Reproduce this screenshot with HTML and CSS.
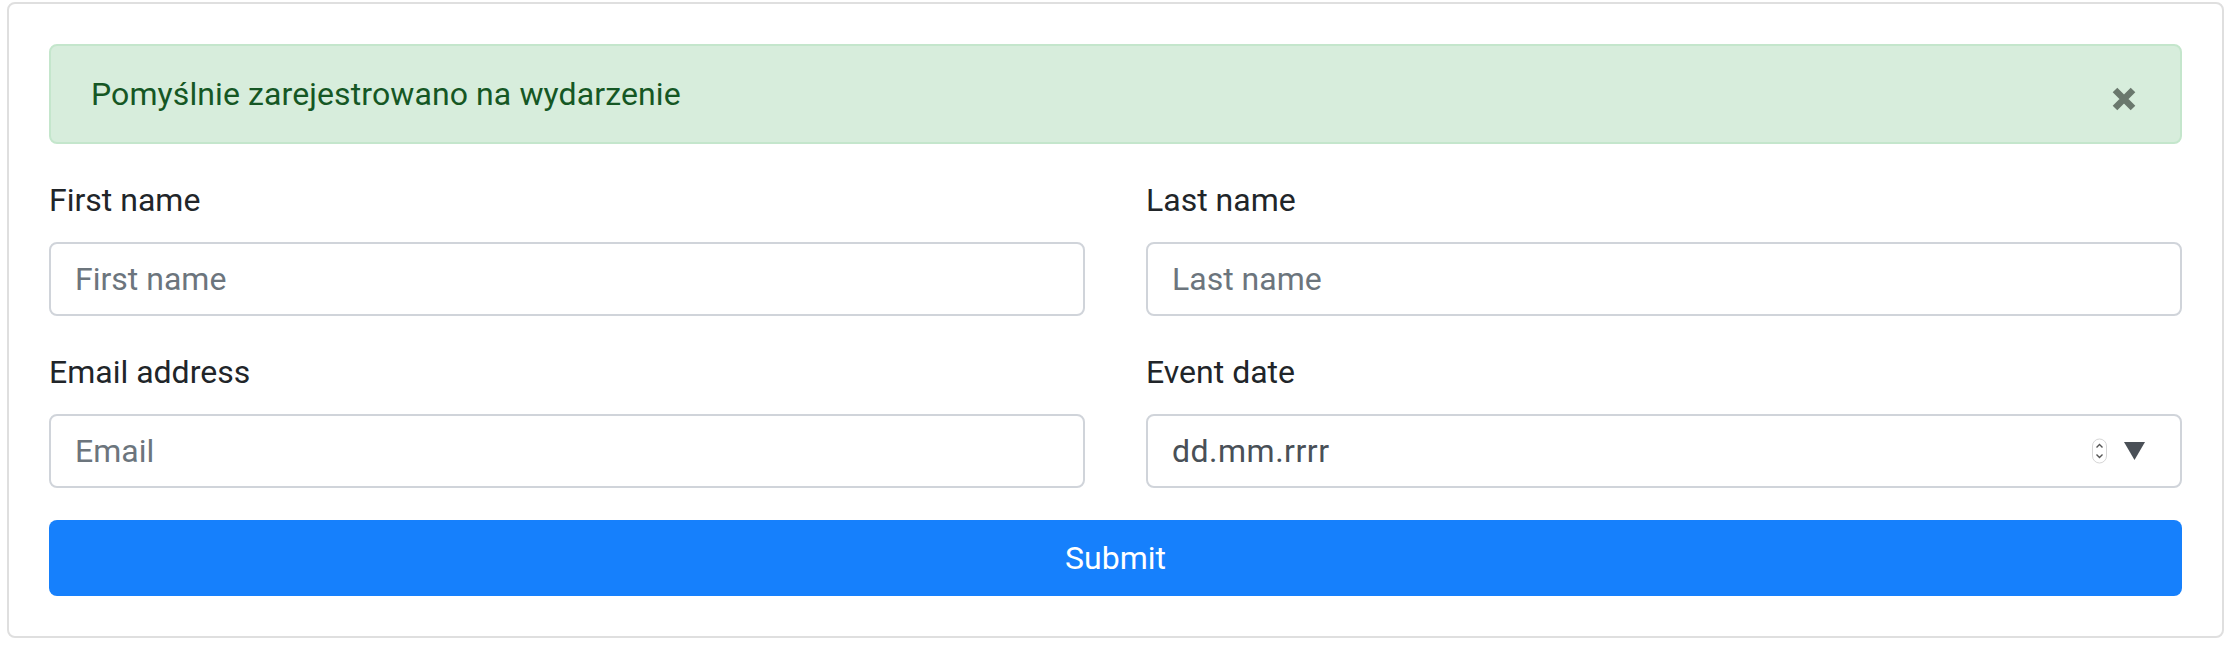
FILE: index.html
```html
<!DOCTYPE html>
<html lang="pl">
<head>
<meta charset="utf-8">
<title>Rejestracja</title>
<link rel="stylesheet" href="styles.css">
</head>
<body>
<div class="card">
  <div class="alert">
    <span class="alert-text">Pomyślnie zarejestrowano na wydarzenie</span>
    <button class="close" type="button" aria-label="Close">
      <svg width="24" height="24" viewBox="0 0 24 24"><path d="M3 3 L21 21 M21 3 L3 21" stroke="currentColor" stroke-width="6.5" fill="none"/></svg>
    </button>
  </div>
  <form class="form">
    <div class="row">
      <div class="group">
        <label class="label" for="fn">First name</label>
        <input class="control" id="fn" type="text" placeholder="First name">
      </div>
      <div class="group">
        <label class="label" for="ln">Last name</label>
        <input class="control" id="ln" type="text" placeholder="Last name">
      </div>
    </div>
    <div class="row">
      <div class="group">
        <label class="label" for="em">Email address</label>
        <input class="control" id="em" type="text" placeholder="Email">
      </div>
      <div class="group">
        <label class="label">Event date</label>
        <div class="control date">
          <span class="date-text">dd.mm.rrrr</span>
          <svg class="spinner" width="17" height="26" viewBox="0 0 17 26"><rect x="1.5" y="1" width="14" height="24" rx="7" fill="#fff" stroke="#d6d6d6" stroke-width="1"/><path d="M5.5 9.5 L8.5 6.5 L11.5 9.5 M5.5 16.5 L8.5 19.5 L11.5 16.5" stroke="#555" stroke-width="1.4" fill="none"/></svg>
          <svg class="caret" width="21" height="18" viewBox="0 0 21 18"><path d="M0 0 H21 L10.5 18 Z" fill="#4a5057"/></svg>
        </div>
      </div>
    </div>
    <button class="submit" type="button">Submit</button>
  </form>
</div>
</body>
</html>
```
FILE: styles.css
```css
* { box-sizing: border-box; }
body {
  margin: 0;
  background: #fff;
  font-family: Roboto, "Liberation Sans", sans-serif;
  color: #212529;
}
.card {
  margin: 2px 9px 0 7px;
  border: 2px solid #dfdfdf;
  border-radius: 8px;
  padding: 40px;
}
.alert {
  display: flex;
  align-items: center;
  padding: 24px 40px;
  margin-bottom: 32px;
  background: #d7eddc;
  border: 2px solid #c4e6cc;
  border-radius: 8px;
  color: #155724;
  font-size: 32px;
  line-height: 48px;
  letter-spacing: 0.1px;
}
.alert-text { flex: 1; }
.close {
  display: flex;
  padding: 0;
  margin: 9px 4px 0 0;
  border: 0;
  background: none;
  color: #6a786d;
}
.row {
  display: grid;
  grid-template-columns: 1fr 1fr;
  column-gap: 61px;
}
.group { margin-bottom: 32px; }
.label {
  display: block;
  font-size: 32px;
  line-height: 48px;
  margin-bottom: 18px;
  color: #212529;
}
.control {
  display: block;
  width: 100%;
  height: 74px;
  padding: 12px 24px;
  border: 2px solid #d0d4da;
  border-radius: 8px;
  background: #fff;
  font-family: Roboto, "Liberation Sans", sans-serif;
  font-size: 32px;
  line-height: 48px;
  color: #495057;
  outline: none;
}
.control::placeholder { color: #6c757d; }
.date {
  display: flex;
  align-items: center;
  padding-right: 35px;
}
.date-text { flex: 1; letter-spacing: 0.5px; }
.spinner { margin-right: 16px; }
.submit {
  display: block;
  width: 100%;
  height: 76px;
  border: 0;
  border-radius: 8px;
  background: #1680fc;
  color: #fff;
  font-family: Roboto, "Liberation Sans", sans-serif;
  font-size: 32px;
  line-height: 48px;
}
```
